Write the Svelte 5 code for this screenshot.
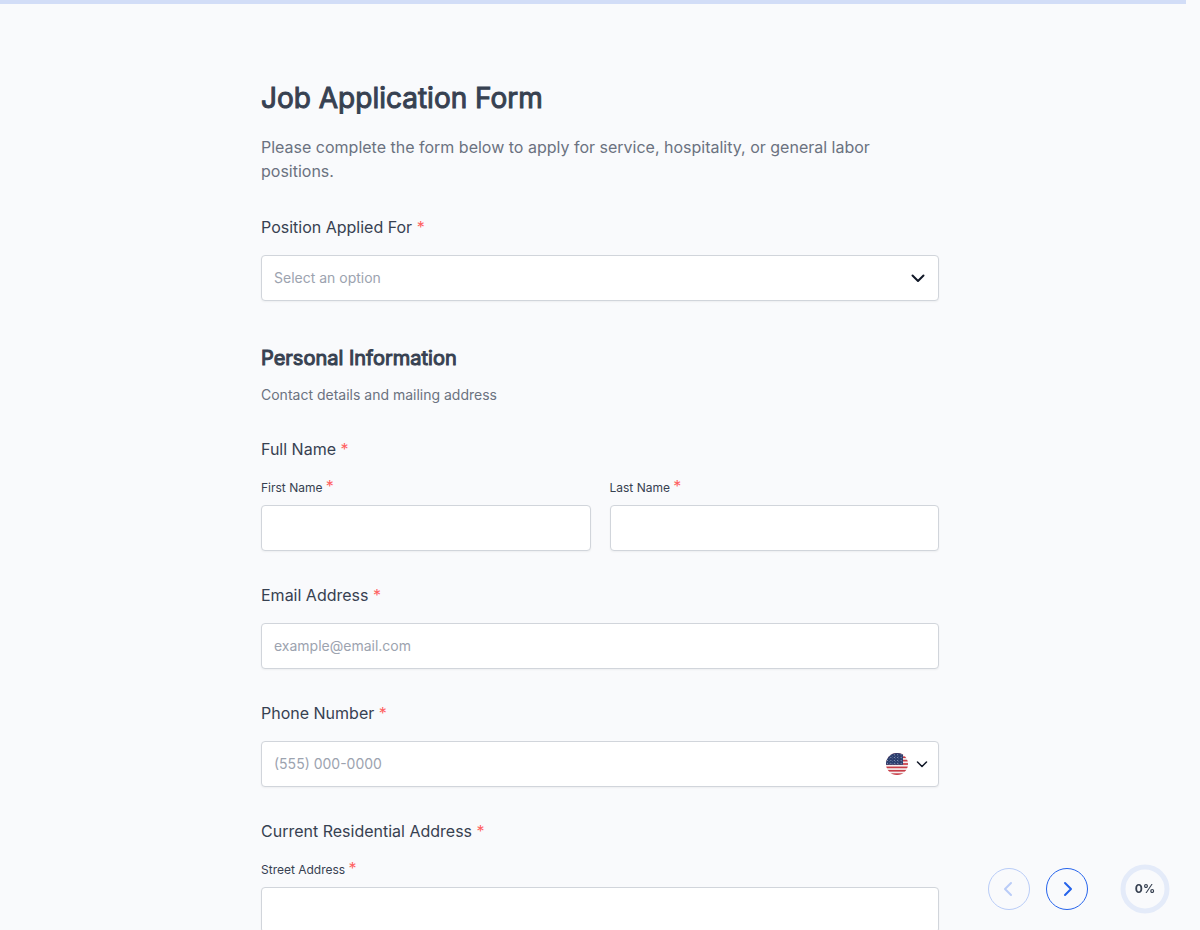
<script lang="ts">
  let position = '';
  let firstName = '';
  let lastName = '';
  let email = '';
  let phone = '';
  let country = 'US';
  let street = '';
  let page = 0;

  const pageCount = 4;
  const positions = ['Server', 'Line Cook', 'Housekeeping', 'Front Desk', 'General Labor'];
  const stripes = [0, 2, 4, 6, 8, 10, 12];
  const stars = [0, 1, 2, 3, 4, 5, 6, 7, 8, 9, 10, 11, 12, 13, 14, 15, 16, 17, 18, 19];

  $: progress = Math.round((page / pageCount) * 100);

  const handlePrev = () => {
    page = page - 1;
  };

  const handleNext = () => {
    if (page < pageCount) page = page + 1;
  };
</script>

<div class="top-bar"></div>

<main class="page">
  <form class="form" on:submit|preventDefault>
    <header class="intro">
      <h1>Job Application Form</h1>
      <p>Please complete the form below to apply for service, hospitality, or general labor positions.</p>
    </header>

    <div class="field">
      <label class="label" for="position">Position Applied For <span class="required">*</span></label>
      <div class="control">
        <select id="position" class="input" class:empty={!position} bind:value={position}>
          <option value="">Select an option</option>
          {#each positions as item}
            <option value={item}>{item}</option>
          {/each}
        </select>
        <svg class="chevron" viewBox="0 0 16 16" aria-hidden="true">
          <path d="M2.5 5.5L8 11l5.5-5.5" />
        </svg>
      </div>
    </div>

    <header class="section">
      <h2>Personal Information</h2>
      <p>Contact details and mailing address</p>
    </header>

    <div class="field" role="group" aria-labelledby="full-name">
      <div class="label" id="full-name">Full Name <span class="required">*</span></div>
      <div class="row">
        <div class="subfield">
          <label class="sublabel" for="first-name">First Name <span class="required">*</span></label>
          <input id="first-name" class="input" type="text" bind:value={firstName} />
        </div>
        <div class="subfield">
          <label class="sublabel" for="last-name">Last Name <span class="required">*</span></label>
          <input id="last-name" class="input" type="text" bind:value={lastName} />
        </div>
      </div>
    </div>

    <div class="field">
      <label class="label" for="email">Email Address <span class="required">*</span></label>
      <input id="email" class="input" type="email" placeholder="example@email.com" bind:value={email} />
    </div>

    <div class="field">
      <label class="label" for="phone">Phone Number <span class="required">*</span></label>
      <div class="control">
        <input id="phone" class="input phone" type="tel" placeholder="(555) 000-0000" bind:value={phone} />
        <div class="country">
          <svg class="flag" viewBox="0 0 22 22" aria-hidden="true">
            <clipPath id="flag-clip"><circle cx="11" cy="11" r="11" /></clipPath>
            <g clip-path="url(#flag-clip)">
              <rect width="22" height="22" fill="#f3eeee" />
              {#each stripes as i}
                <rect y={(i * 22) / 13} width="22" height={22 / 13} fill="#c93d47" />
              {/each}
              <rect width="17" height="11.8" fill="#2b3d6d" />
              {#each stars as i}
                <circle cx={1.5 + (i % 5) * 3.4} cy={1.8 + Math.floor(i / 5) * 2.8} r="0.5" fill="#a9b4ce" />
                <circle cx={3.2 + (i % 5) * 3.2} cy={3.2 + Math.floor(i / 5) * 2.6} r="0.4" fill="#8290b3" />
              {/each}
            </g>
          </svg>
          <svg class="chevron-small" viewBox="0 0 12 12" aria-hidden="true">
            <path d="M1.5 4L6 8.500l4.500-4.500" />
          </svg>
          <select aria-label="Country" bind:value={country}>
            <option value="US">US</option>
          </select>
        </div>
      </div>
    </div>

    <div class="field" role="group" aria-labelledby="address">
      <div class="label" id="address">Current Residential Address <span class="required">*</span></div>
      <div class="subfield">
        <label class="sublabel" for="street">Street Address <span class="required">*</span></label>
        <input id="street" class="input" type="text" bind:value={street} />
      </div>
    </div>
  </form>
</main>

<nav class="pager" aria-label="Form pages">
  <button type="button" aria-label="Previous" disabled={page === 0} on:click={handlePrev}>
    <svg viewBox="0 0 16 16"><path d="M10 2L4 8l6 6" /></svg>
  </button>
  <button type="button" aria-label="Next" on:click={handleNext}>
    <svg viewBox="0 0 16 16"><path d="M6 2l6 6-6 6" /></svg>
  </button>
  <div class="progress">
    <svg viewBox="0 0 50 50" aria-hidden="true">
      <circle class="track" cx="25" cy="25" r="22" />
      {#if progress > 0}
        <circle class="value" cx="25" cy="25" r="22" pathLength="100" stroke-dasharray="{progress} 100" />
      {/if}
    </svg>
    <span>{progress}%</span>
  </div>
</nav>

<style>
  :global(body) {
    margin: 0;
    background: #f9fafc;
    color: #374151;
    font-family: Inter, "Liberation Sans", sans-serif;
    font-size: 16px;
    line-height: 24px;
  }

  .top-bar {
    position: fixed;
    top: 0;
    left: 0;
    right: 14px;
    height: 4px;
    background: #d2ddf7;
    z-index: 2;
  }

  .page {
    height: 100vh;
    box-sizing: border-box;
    padding: 80px 32px 0;
    overflow-y: auto;
    scrollbar-width: none;
  }

  .form {
    display: flex;
    flex-direction: column;
    gap: 32px;
    max-width: 678px;
    margin: 0 auto;
    padding-bottom: 80px;
  }

  h1,
  h2,
  p {
    margin: 0;
  }

  h1,
  h2 {
    font-weight: 400;
    -webkit-text-stroke: 1px currentColor;
  }

  h1 {
    font-size: 28px;
    line-height: 36px;
  }

  .intro p {
    margin-top: 19px;
    color: #6b7280;
  }

  .section {
    padding-top: 11px;
  }

  h2 {
    font-size: 20px;
    line-height: 28px;
  }

  .section p {
    margin-top: 13px;
    font-size: 14px;
    line-height: 20px;
    color: #6b7280;
  }

  .field {
    display: flex;
    flex-direction: column;
    gap: 16px;
  }

  .required {
    font-size: 16px;
    line-height: 0;
    color: #ff6161;
  }

  .row {
    display: grid;
    grid-template-columns: 1fr 1fr;
    gap: 19px;
  }

  .subfield {
    display: flex;
    flex-direction: column;
    gap: 6px;
  }

  .sublabel {
    font-size: 12px;
    line-height: 22px;
  }

  .control {
    position: relative;
  }

  .input {
    display: block;
    width: 100%;
    height: 46px;
    box-sizing: border-box;
    margin: 0;
    padding: 0 12px 2px;
    border: 1px solid #d1d5db;
    border-radius: 4px;
    background: #fff;
    color: #374151;
    font-family: inherit;
    font-size: 14px;
    box-shadow: 0 1px 2px rgba(0, 0, 0, 0.05);
    appearance: none;
  }

  .input:focus {
    outline: none;
    border-color: #2563eb;
  }

  .input.empty,
  .input::placeholder {
    color: #9ca3af;
  }

  .input.phone {
    padding-right: 64px;
  }

  .chevron,
  .chevron-small {
    fill: none;
    stroke: #111827;
    stroke-width: 2;
    stroke-linecap: round;
    stroke-linejoin: round;
  }

  .chevron {
    position: absolute;
    top: 15px;
    right: 13px;
    width: 16px;
    height: 16px;
    pointer-events: none;
  }

  .chevron-small {
    width: 12px;
    height: 12px;
    stroke-width: 1.5;
  }

  .country {
    position: absolute;
    top: 1px;
    bottom: 1px;
    right: 11px;
    display: flex;
    align-items: center;
    gap: 8px;
  }

  .country select {
    position: absolute;
    inset: 0;
    width: 100%;
    opacity: 0;
    cursor: pointer;
  }

  .flag {
    width: 22px;
    height: 22px;
  }

  .pager {
    position: fixed;
    right: 30px;
    bottom: 16px;
    display: flex;
    align-items: center;
    gap: 16px;
  }

  .pager button {
    display: flex;
    align-items: center;
    justify-content: center;
    width: 42px;
    height: 42px;
    padding: 0;
    border: 1px solid #2563eb;
    border-radius: 50%;
    background: #f9fafc;
    color: #2563eb;
    cursor: pointer;
  }

  .pager button:disabled {
    opacity: 0.3;
    cursor: default;
  }

  .pager button svg {
    width: 16px;
    height: 16px;
    fill: none;
    stroke: currentColor;
    stroke-width: 2;
    stroke-linecap: round;
    stroke-linejoin: round;
  }

  .progress {
    position: relative;
    display: flex;
    align-items: center;
    justify-content: center;
    width: 50px;
    height: 50px;
    margin-left: 16px;
    font-size: 12px;
    font-weight: 700;
  }

  .progress svg {
    position: absolute;
    inset: 0;
    fill: none;
    stroke-width: 5;
    transform: rotate(-90deg);
  }

  .track {
    stroke: #e4ebf9;
  }

  .value {
    stroke: #2563eb;
  }
</style>
